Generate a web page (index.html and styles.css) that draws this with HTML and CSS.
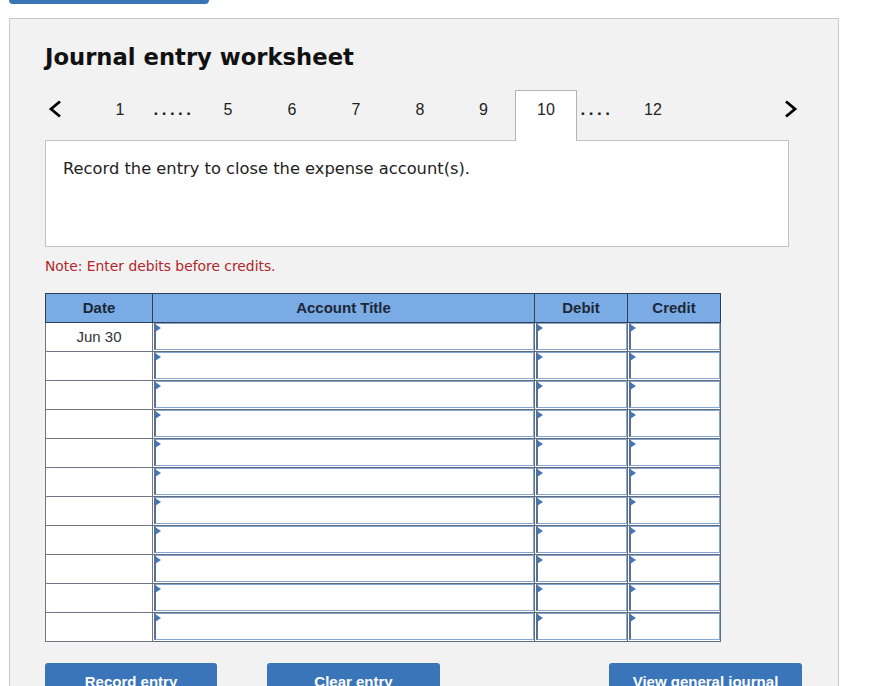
FILE: index.html
```html
<!DOCTYPE html>
<html>
<head>
<meta charset="utf-8">
<link rel="stylesheet" href="styles.css">
</head>
<body>
<div class="topbar"></div>
<div class="panel">
  <h1 class="title">Journal entry worksheet</h1>
  <div class="nav">
    <span class="arrow"><svg width="14" height="18" viewBox="0 0 14 18"><path d="M12 1.5 L3 9 L12 16.5" fill="none" stroke="#000" stroke-width="2.8"/></svg></span>
    <span class="navsp"></span>
    <span class="num w64">1</span>
    <span class="dots w44">.....</span>
    <span class="num w64">5</span>
    <span class="num w64">6</span>
    <span class="num w64">7</span>
    <span class="num w64">8</span>
    <span class="num w63">9</span>
    <span class="num tab">10</span>
    <span class="dots w40">....</span>
    <span class="num w72">12</span>
    <span class="arrow next"><svg width="14" height="18" viewBox="0 0 14 18"><path d="M2 1.5 L11 9 L2 16.5" fill="none" stroke="#000" stroke-width="2.8"/></svg></span>
  </div>
  <div class="prompt">Record the entry to close the expense account(s).</div>
  <p class="note">Note: Enter debits before credits.</p>
  <table class="journal">
    <thead>
      <tr><th class="c-date">Date</th><th class="c-acct">Account Title</th><th class="c-num">Debit</th><th class="c-num">Credit</th></tr>
    </thead>
    <tbody>
      <tr><td class="date">Jun 30</td><td class="inp"><div class="field"></div></td><td class="inp"><div class="field"></div></td><td class="inp"><div class="field"></div></td></tr>
      <tr><td class="date"></td><td class="inp"><div class="field"></div></td><td class="inp"><div class="field"></div></td><td class="inp"><div class="field"></div></td></tr>
      <tr><td class="date"></td><td class="inp"><div class="field"></div></td><td class="inp"><div class="field"></div></td><td class="inp"><div class="field"></div></td></tr>
      <tr><td class="date"></td><td class="inp"><div class="field"></div></td><td class="inp"><div class="field"></div></td><td class="inp"><div class="field"></div></td></tr>
      <tr><td class="date"></td><td class="inp"><div class="field"></div></td><td class="inp"><div class="field"></div></td><td class="inp"><div class="field"></div></td></tr>
      <tr><td class="date"></td><td class="inp"><div class="field"></div></td><td class="inp"><div class="field"></div></td><td class="inp"><div class="field"></div></td></tr>
      <tr><td class="date"></td><td class="inp"><div class="field"></div></td><td class="inp"><div class="field"></div></td><td class="inp"><div class="field"></div></td></tr>
      <tr><td class="date"></td><td class="inp"><div class="field"></div></td><td class="inp"><div class="field"></div></td><td class="inp"><div class="field"></div></td></tr>
      <tr><td class="date"></td><td class="inp"><div class="field"></div></td><td class="inp"><div class="field"></div></td><td class="inp"><div class="field"></div></td></tr>
      <tr><td class="date"></td><td class="inp"><div class="field"></div></td><td class="inp"><div class="field"></div></td><td class="inp"><div class="field"></div></td></tr>
      <tr><td class="date"></td><td class="inp"><div class="field"></div></td><td class="inp"><div class="field"></div></td><td class="inp"><div class="field"></div></td></tr>
    </tbody>
  </table>
  <div class="buttons">
    <button class="btn b-record">Record entry</button>
    <button class="btn b-clear">Clear entry</button>
    <span class="bsp"></span>
    <button class="btn b-view">View general journal</button>
  </div>
</div>
</body>
</html>
```
FILE: styles.css
```css
html, body {
  margin: 0;
  padding: 0;
  background: #ffffff;
}
body {
  font-family: "DejaVu Sans", Verdana, sans-serif;
  overflow: hidden;
}
.topbar {
  margin-left: 9px;
  width: 200px;
  height: 4px;
  background: #3a74b9;
  border-radius: 0 0 4px 4px;
}
.panel {
  margin-left: 9px;
  margin-top: 14px;
  width: 793px;
  height: 720px;
  padding: 0 0 0 35px;
  background: #f2f2f2;
  border: 1px solid #c8c8c8;
}
.title {
  margin: 24px 0 0 0;
  font-size: 22.7px;
  line-height: 28px;
  font-weight: bold;
  color: #111;
}
.nav {
  display: flex;
  align-items: stretch;
  width: 756px;
  height: 50px;
  margin-top: 19px;
  font-family: "Liberation Sans", Arial, sans-serif;
  font-size: 16px;
  color: #222;
}
.nav > span {
  display: flex;
  justify-content: center;
  align-items: flex-start;
  padding-top: 10px;
  line-height: 20px;
  box-sizing: border-box;
}
.arrow { width: 20px; }
.arrow svg { display: block; }
.navsp { width: 23px; }
.w64 { width: 64px; }
.w63 { width: 63px; }
.w44 { width: 44px; }
.w40 { width: 40px; }
.w72 { width: 72px; }
.dots {
  font-weight: bold;
  font-size: 17px;
  letter-spacing: 3.5px;
  color: #222;
}
.tab {
  width: 62px;
  background: #ffffff;
  border: 1px solid #b4b4b4;
  border-bottom: none;
  position: relative;
  z-index: 2;
  height: 51px;
  padding-top: 9px !important;
}
.next { margin-left: auto; }
.prompt {
  width: 742px;
  height: 86px;
  padding-top: 19px;
  background: #ffffff;
  border: 1px solid #c3c3c3;
  font-size: 16.3px;
  line-height: 18px;
  color: #222;
  text-indent: 17px;
}
.note {
  margin: 11px 0 0 0;
  font-size: 13.85px;
  line-height: 16px;
  color: #b0262b;
}
.journal {
  margin-top: 19px;
  border-collapse: collapse;
  font-family: "Liberation Sans", Arial, sans-serif;
  table-layout: fixed;
  width: 675px;
}
.journal th {
  height: 29px;
  padding: 0 0 1px 0;
  box-sizing: border-box;
  background: #7aabe4;
  border: 1px solid #2f3f56;
  font-size: 15px;
  font-weight: bold;
  color: #1c2737;
  text-align: center;
}
.c-date { width: 107px; }
.c-acct { width: 382px; }
.c-num { width: 93px; }
.journal td {
  height: 29px;
  padding: 0;
  box-sizing: border-box;
  background: #ffffff;
  border: 1px solid #6f7785;
}
.journal td.date {
  text-align: center;
  font-size: 15px;
  color: #333;
  vertical-align: top;
  padding-top: 5px;
}
.journal td.inp {
  border-color: #5e6c80;
  vertical-align: top;
}
.field {
  position: relative;
  height: 25px;
  margin: 0 0 1px 1px;
  border: 1px solid #86a6d0;
  border-left: 2px solid #5d6f8a;
  background: #ffffff;
}
.field::before {
  content: "";
  position: absolute;
  left: -1px;
  top: 0;
  width: 0;
  height: 0;
  border-top: 4px solid transparent;
  border-bottom: 4px solid transparent;
  border-left: 6px solid #4575b4;
}
.buttons {
  display: flex;
  align-items: flex-start;
  width: 757px;
  margin-top: 21px;
}
.btn {
  height: 37px;
  padding: 0;
  box-sizing: border-box;
  border: none;
  border-radius: 3px 3px 0 0;
  background: #3a75ba;
  color: #ffffff;
  font-family: "Liberation Sans", Arial, sans-serif;
  font-size: 15px;
  font-weight: bold;
  line-height: 18px;
  text-align: center;
}
.b-record { width: 172px; }
.b-clear { width: 173px; margin-left: 50px; }
.bsp { flex: 1; }
.b-view { width: 193px; }
```
